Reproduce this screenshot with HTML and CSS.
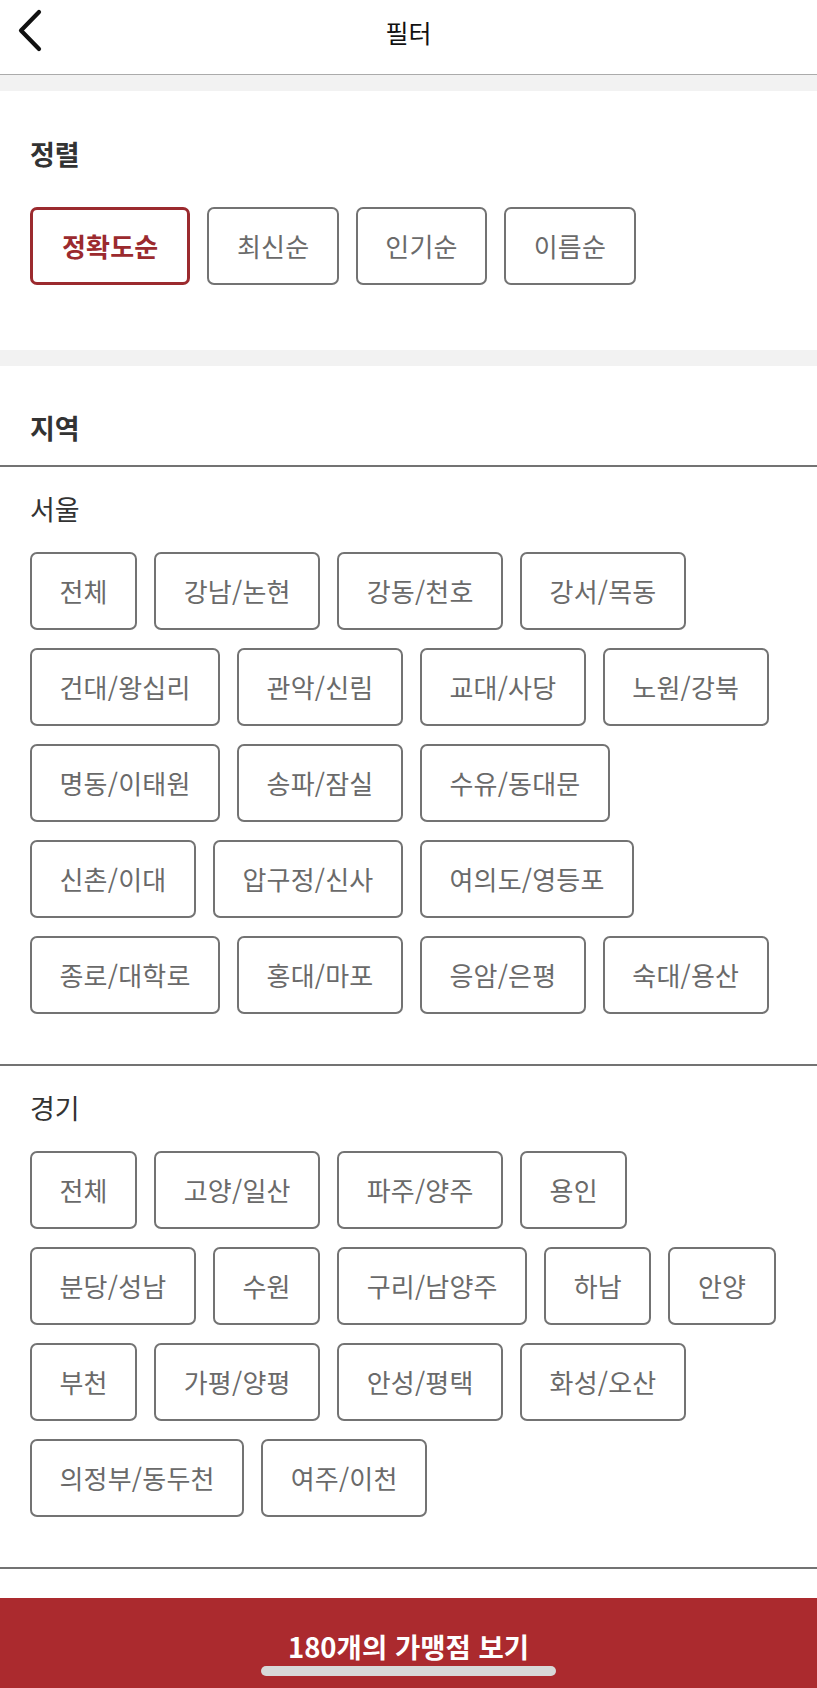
FILE: index.html
```html
<!DOCTYPE html>
<html lang="ko">
<head>
<meta charset="utf-8">
<title>필터</title>
<link rel="stylesheet" href="styles.css">
</head>
<body>
<div class="page">
  <header class="topbar">
    <button class="back" aria-label="뒤로">
      <svg width="27" height="43" viewBox="0 0 27 43"><path d="M23 3 L5 21.5 L23 40" fill="none" stroke="#111" stroke-width="4.2" stroke-linecap="round" stroke-linejoin="round"/></svg>
    </button>
    <h1 class="title">필터</h1>
    <span class="spacer"></span>
  </header>
  <div class="band"></div>

  <section class="sort">
    <h2 class="heading">정렬</h2>
    <div class="chips">
      <button class="chip chip-active">정확도순</button>
      <button class="chip">최신순</button>
      <button class="chip">인기순</button>
      <button class="chip">이름순</button>
    </div>
  </section>

  <div class="band"></div>

  <section class="region">
    <h2 class="heading region-heading">지역</h2>

    <div class="group">
      <h3 class="group-title">서울</h3>
      <div class="chips">
        <button class="chip">전체</button>
        <button class="chip">강남/논현</button>
        <button class="chip">강동/천호</button>
        <button class="chip">강서/목동</button>
        <button class="chip">건대/왕십리</button>
        <button class="chip">관악/신림</button>
        <button class="chip">교대/사당</button>
        <button class="chip">노원/강북</button>
        <button class="chip">명동/이태원</button>
        <button class="chip">송파/잠실</button>
        <button class="chip">수유/동대문</button>
        <button class="chip">신촌/이대</button>
        <button class="chip">압구정/신사</button>
        <button class="chip">여의도/영등포</button>
        <button class="chip">종로/대학로</button>
        <button class="chip">홍대/마포</button>
        <button class="chip">응암/은평</button>
        <button class="chip">숙대/용산</button>
      </div>
    </div>

    <div class="group">
      <h3 class="group-title">경기</h3>
      <div class="chips">
        <button class="chip">전체</button>
        <button class="chip">고양/일산</button>
        <button class="chip">파주/양주</button>
        <button class="chip">용인</button>
        <button class="chip">분당/성남</button>
        <button class="chip">수원</button>
        <button class="chip">구리/남양주</button>
        <button class="chip">하남</button>
        <button class="chip">안양</button>
        <button class="chip">부천</button>
        <button class="chip">가평/양평</button>
        <button class="chip">안성/평택</button>
        <button class="chip">화성/오산</button>
        <button class="chip">의정부/동두천</button>
        <button class="chip">여주/이천</button>
      </div>
    </div>
  </section>

  <footer class="cta">
    <span class="cta-text">180개의 가맹점 보기</span>
    <span class="home-indicator"></span>
  </footer>
</div>
</body>
</html>
```

FILE: styles.css
```css
* { box-sizing: border-box; }

html, body {
  margin: 0;
  padding: 0;
  background: #ffffff;
}

body {
  font-family: "Noto Sans CJK KR", "Noto Sans", sans-serif;
  color: #333333;
}

.page {
  width: 817px;
  display: flex;
  flex-direction: column;
}

.topbar {
  display: grid;
  grid-template-columns: 70px 1fr 70px;
  height: 75px;
  border-bottom: 1px solid #ababab;
}

.back {
  border: 0;
  background: none;
  padding: 9px 0 0 16px;
  margin: 0;
  display: flex;
  align-items: flex-start;
  cursor: pointer;
}

.title {
  margin: 0;
  font-size: 25px;
  font-weight: 400;
  line-height: 64px;
  text-align: center;
  color: #111111;
}

.band {
  height: 16px;
  background: #f2f2f2;
}

.heading {
  margin: 0;
  font-size: 27px;
  font-weight: 700;
  line-height: 36px;
  color: #333333;
}

.sort {
  padding: 45px 30px 65px;
}

.sort .chips {
  margin-top: 35px;
}

.chips {
  display: flex;
  flex-wrap: wrap;
  gap: 18px 17px;
}

.chip {
  height: 78px;
  padding: 0 27.5px;
  border: 2px solid #737373;
  border-radius: 7px;
  background: #ffffff;
  font-family: "Noto Sans CJK KR", "Noto Sans", sans-serif;
  font-size: 26px;
  font-weight: 400;
  letter-spacing: 0.2px;
  color: #6a6a6a;
  line-height: 1;
  white-space: nowrap;
}

.chip-active {
  border: 3px solid #9b2a2e;
  color: #9b2a2e;
  font-weight: 700;
  padding: 0 29px;
}

.region-heading {
  padding: 44px 30px 19px;
  border-bottom: 2px solid #737373;
}

.group {
  padding: 24px 30px 50px 30px;
  border-bottom: 2px solid #737373;
}

.group-title {
  margin: 0 0 25px;
  font-size: 27px;
  font-weight: 400;
  line-height: 36px;
  color: #333333;
}

.cta {
  margin-top: 29px;
  height: 91px;
  background: #ab2a2e;
  display: flex;
  flex-direction: column;
  align-items: center;
  padding-top: 30px;
}

.cta-text {
  font-size: 27.5px;
  font-weight: 700;
  line-height: 36px;
  color: #ffffff;
}

.home-indicator {
  margin-top: 2px;
  width: 295px;
  height: 10px;
  border-radius: 5px;
  background: #d8d8d8;
}
```
